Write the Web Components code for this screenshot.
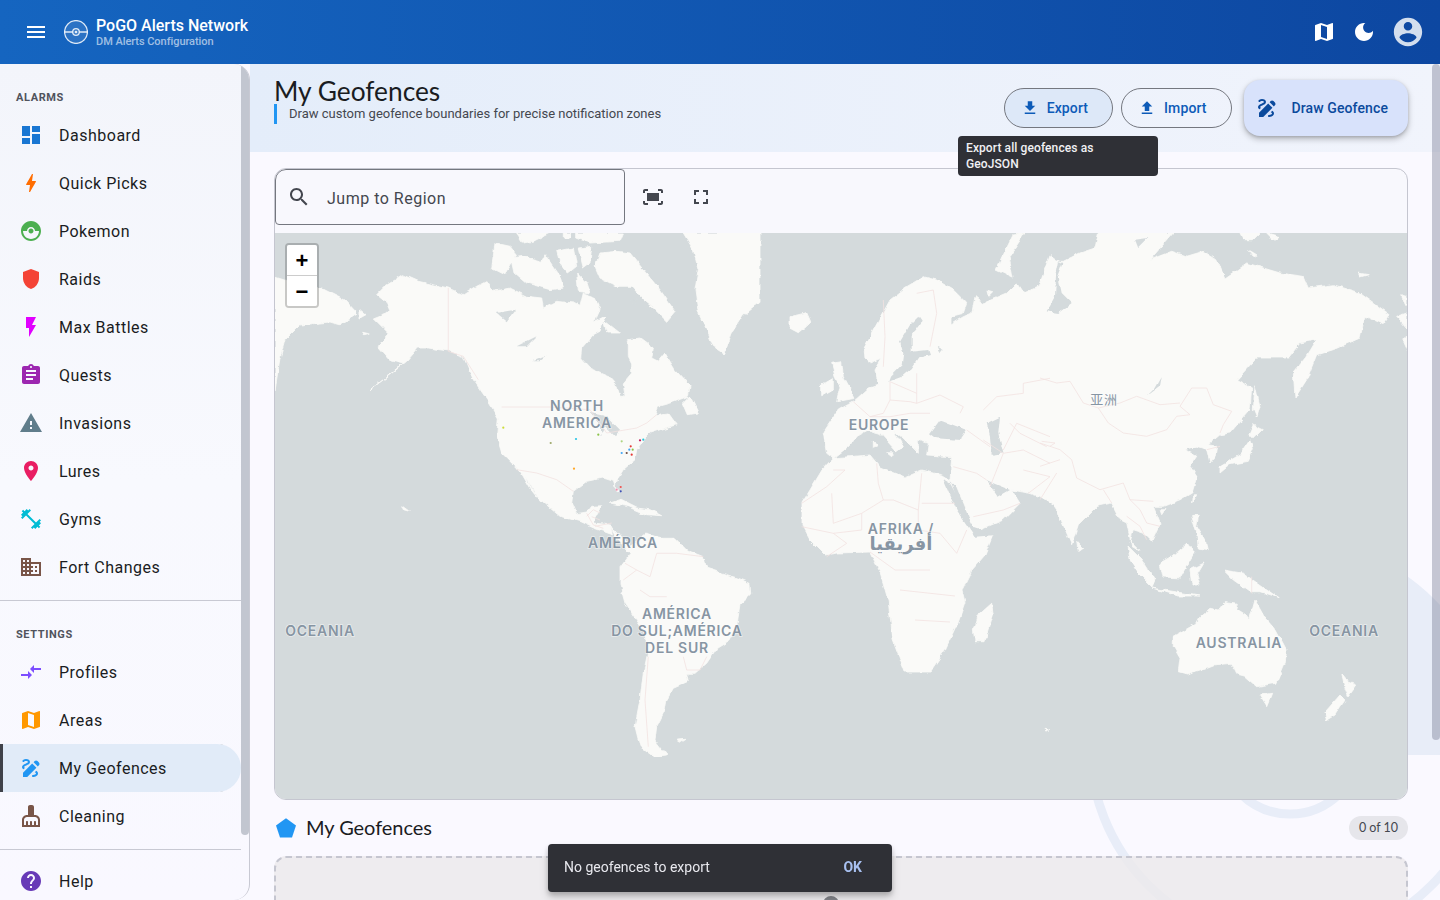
<!DOCTYPE html>
<html lang="en">
<head>
<meta charset="utf-8">
<title>PoGO Alerts Network</title>
<style>
  html, body { margin: 0; height: 100%; overflow: hidden; }
  body { font-family: Roboto, "Liberation Sans", sans-serif; background: #faf9ff; }
</style>
</head>
<body>
<app-shell>
  <nav-sidebar slot="side">
    <nav-label>ALARMS</nav-label>
    <nav-item icon="dashboard" color="#1976d2">Dashboard</nav-item>
    <nav-item icon="bolt" color="#ff6d00">Quick Picks</nav-item>
    <nav-item icon="pokeball" color="#4caf50">Pokemon</nav-item>
    <nav-item icon="shield" color="#f44336">Raids</nav-item>
    <nav-item icon="flash" color="#e100ff">Max Battles</nav-item>
    <nav-item icon="assignment" color="#9c27b0">Quests</nav-item>
    <nav-item icon="warning" color="#607d8b">Invasions</nav-item>
    <nav-item icon="place" color="#e91e63">Lures</nav-item>
    <nav-item icon="fitness" color="#00bcd4">Gyms</nav-item>
    <nav-item icon="domain" color="#795548">Fort Changes</nav-item>
    <nav-divider></nav-divider>
    <nav-label>SETTINGS</nav-label>
    <nav-item icon="compare" color="#7c4dff">Profiles</nav-item>
    <nav-item icon="map" color="#ff9800">Areas</nav-item>
    <nav-item icon="draw" color="#2196f3" active>My Geofences</nav-item>
    <nav-item icon="cleaning" color="#795548">Cleaning</nav-item>
    <nav-divider tight></nav-divider>
    <nav-item icon="help" color="#673ab7">Help</nav-item>
  </nav-sidebar>
  <main-view slot="main">
    <page-head></page-head>
    <map-card></map-card>
    <fence-list></fence-list>
  </main-view>
</app-shell>
<snack-bar></snack-bar>

<script>
const PATHS = {
  menu: 'M3 18h18v-2H3v2zm0-5h18v-2H3v2zm0-7v2h18V6H3z',
  dashboard: 'M3 13h8V3H3v10zm0 8h8v-6H3v6zm10 0h8V11h-8v10zm0-18v6h8V3h-8z',
  bolt: 'M11 21h-1l1-7H7.5c-.58 0-.57-.32-.38-.66.19-.34.05-.08.07-.12C8.48 10.94 10.42 7.54 13 3h1l-1 7h3.5c.49 0 .56.33.47.51l-.07.15C12.96 17.55 11 21 11 21z',
  pokeball: 'M14.5 12c0 1.38-1.12 2.5-2.5 2.5S9.5 13.38 9.5 12s1.12-2.5 2.5-2.5 2.5 1.12 2.5 2.5zm7.5 0c0 5.52-4.48 10-10 10S2 17.52 2 12 6.48 2 12 2s10 4.48 10 10zm-2 0h-4c0-2.21-1.79-4-4-4s-4 1.79-4 4H4c0 4.41 3.59 8 8 8s8-3.59 8-8z',
  shield: 'M12 2 4 5v6.09c0 5.05 3.41 9.76 8 10.91 4.59-1.15 8-5.86 8-10.91V5l-8-3z',
  flash: 'M7 2v11h3v9l7-12h-4l4-8z',
  assignment: 'M19 3h-4.18C14.4 1.84 13.3 1 12 1c-1.3 0-2.4.84-2.82 2H5c-1.1 0-2 .9-2 2v14c0 1.1.9 2 2 2h14c1.1 0 2-.9 2-2V5c0-1.1-.9-2-2-2zm-7 0c.55 0 1 .45 1 1s-.45 1-1 1-1-.45-1-1 .45-1 1-1zm2 14H7v-2h7v2zm3-4H7v-2h10v2zm0-4H7V7h10v2z',
  warning: 'M1 21h22L12 2 1 21zm12-3h-2v-2h2v2zm0-4h-2v-4h2v4z',
  place: 'M12 2C8.13 2 5 5.13 5 9c0 5.25 7 13 7 13s7-7.75 7-13c0-3.87-3.13-7-7-7zm0 9.5c-1.38 0-2.5-1.12-2.5-2.5s1.12-2.5 2.5-2.5 2.5 1.12 2.5 2.5-1.12 2.5-2.5 2.5z',
  fitness: 'M20.57 14.86L22 13.43 20.57 12 17 15.57 8.43 7 12 3.43 10.57 2 9.14 3.43 7.71 2 5.57 4.14 4.14 2.71 2.71 4.14l1.43 1.43L2 7.71l1.43 1.43L2 10.57 3.43 12 7 8.43 15.57 17 12 20.57 13.43 22l1.43-1.43L16.29 22l2.14-2.14 1.43 1.43 1.43-1.43-1.43-1.43L22 16.29z',
  domain: 'M12 7V3H2v18h20V7H12zM6 19H4v-2h2v2zm0-4H4v-2h2v2zm0-4H4V9h2v2zm0-4H4V5h2v2zm4 12H8v-2h2v2zm0-4H8v-2h2v2zm0-4H8V9h2v2zm0-4H8V5h2v2zm10 12h-8v-2h2v-2h-2v-2h2v-2h-2V9h8v10zm-2-8h-2v2h2v-2zm0 4h-2v2h2v-2z',
  compare: 'M9.01 14H2v2h7.01v3L13 15l-3.99-4v3zm5.98-1v-3H22V8h-7.01V5L11 9l3.99 4z',
  map: 'M20.5 3l-.16.03L15 5.1 9 3 3.36 4.9c-.21.07-.36.25-.36.48V20.5c0 .28.22.5.5.5l.16-.03L9 18.9l6 2.1 5.64-1.9c.21-.07.36-.25.36-.48V3.5c0-.28-.22-.5-.5-.5zM15 19l-6-2.11V5l6 2.11V19z',
  draw: 'M18.85 10.39l1.06-1.06c.78-.78.78-2.05 0-2.83L18.5 5.09c-.78-.78-2.05-.78-2.83 0l-1.06 1.06 4.24 4.24zm-5.66-2.83L4 16.76V21h4.24l9.19-9.19-4.24-4.25zM19 17.5c0 2.19-2.54 3.5-5 3.5-.55 0-1-.45-1-1s.45-1 1-1c1.54 0 3-.73 3-1.5 0-.47-.48-.87-1.23-1.2l1.48-1.48c1.07.63 1.75 1.47 1.75 2.68zM4.58 13.35C3.61 12.79 3 12.06 3 11c0-1.8 1.89-2.63 3.56-3.36C7.59 7.18 9 6.56 9 6c0-.41-.78-1-2-1-1.26 0-1.8.61-1.83.64-.35.41-.98.46-1.4.12-.41-.34-.49-.95-.15-1.38C3.73 4.24 4.76 3 7 3s4 1.32 4 3c0 1.87-1.93 2.72-3.64 3.47C6.42 9.88 5 10.5 5 11c0 .31.43.6 1.07.86l-1.49 1.49z',
  cleaning: 'M16 11h-1V3c0-1.1-.9-2-2-2h-2c-1.1 0-2 .9-2 2v8H8c-2.76 0-5 2.24-5 5v7h18v-7c0-2.76-2.24-5-5-5zm3 10h-2v-3c0-.55-.45-1-1-1s-1 .45-1 1v3h-2v-3c0-.55-.45-1-1-1s-1 .45-1 1v3H9v-3c0-.55-.45-1-1-1s-1 .45-1 1v3H5v-5c0-1.65 1.35-3 3-3h8c1.65 0 3 1.35 3 3v5z',
  help: 'M12 2C6.48 2 2 6.48 2 12s4.48 10 10 10 10-4.48 10-10S17.52 2 12 2zm1 17h-2v-2h2v2zm2.07-7.75l-.9.92C13.45 12.9 13 13.5 13 15h-2v-.5c0-1.1.45-2.1 1.17-2.83l1.24-1.26c.37-.36.59-.86.59-1.41 0-1.1-.9-2-2-2s-2 .9-2 2H8c0-2.21 1.79-4 4-4s4 1.79 4 4c0 .88-.36 1.68-.93 2.25z',
  moon: 'M12 3c-4.97 0-9 4.03-9 9s4.03 9 9 9 9-4.03 9-9c0-.46-.04-.92-.1-1.36-.98 1.37-2.58 2.26-4.4 2.26-2.98 0-5.4-2.42-5.4-5.4 0-1.81.89-3.42 2.26-4.4-.44-.06-.9-.1-1.36-.1z',
  account: 'M12 2C6.48 2 2 6.48 2 12s4.48 10 10 10 10-4.48 10-10S17.52 2 12 2zm0 3c1.66 0 3 1.34 3 3s-1.34 3-3 3-3-1.34-3-3 1.34-3 3-3zm0 14.2c-2.5 0-4.71-1.28-6-3.22.03-1.99 4-3.08 6-3.08 1.99 0 5.97 1.09 6 3.08-1.29 1.94-3.5 3.22-6 3.22z',
  download: 'M5 20h14v-2H5v2zM19 9h-4V3H9v6H5l7 7 7-7z',
  upload: 'M5 20h14v-2H5v2zm0-10h4v6h6v-6h4l-7-7-7 7z',
  search: 'M15.5 14h-.79l-.28-.27C15.41 12.59 16 11.11 16 9.5 16 5.91 13.09 3 9.5 3S3 5.91 3 9.5 5.91 16 9.5 16c1.61 0 3.09-.59 4.23-1.57l.27.28v.79l5 4.99L20.49 19l-4.99-5zm-6 0C7.01 14 5 11.99 5 9.5S7.01 5 9.5 5 14 7.01 14 9.5 11.99 14 9.5 14z',
  fit: 'M17 4h3c1.1 0 2 .9 2 2v2h-2V6h-3V4zM4 8V6h3V4H4c-1.1 0-2 .9-2 2v2h2zm16 8v2h-3v2h3c1.1 0 2-.9 2-2v-2h-2zM7 18H4v-2H2v2c0 1.1.9 2 2 2h3v-2zM18 8H6v8h12V8z',
  fullscreen: 'M7 14H5v5h5v-2H7v-3zm-2-4h2V7h3V5H5v5zm12 7h-3v2h5v-5h-2v3zM14 5v2h3v3h2V5h-5z',
  pentagon: 'M6 21.5 2 9.6 12 2.2l10 7.4-4 11.9z'
};

const svgIcon = (name, size, color) =>
  `<svg width="${size}" height="${size}" viewBox="0 0 24 24" fill="${color}" style="display:block;flex:none"><path d="${PATHS[name]}"/></svg>`;

class AppShell extends HTMLElement {
  constructor() {
    super();
    this.attachShadow({mode: 'open'}).innerHTML = `
      <style>
        :host { display: flex; flex-direction: column; height: 100vh; overflow: hidden; }
        header {
          flex: none; height: 64px; display: flex; align-items: center; padding: 0 15px 0 24px;
          background: linear-gradient(90deg, #1565c0, #0d47a1); color: #fff;
        }
        .logo { margin-left: 16px; margin-right: 8px; display: block; }
        .brand { display: flex; flex-direction: column; margin-top: -1px; }
        .brand b { font-size: 16px; line-height: 20px; font-weight: 500; }
        .brand small { font-size: 11px; line-height: 12px; color: rgba(255,255,255,.6); font-weight: 500; letter-spacing: -.05px; }
        .right { margin-left: auto; display: flex; align-items: center; gap: 16px; }
        .right svg:last-child { margin-left: -1px; }
        .row { flex: 1; min-height: 0; display: flex; }
      </style>
      <header>
        ${svgIcon('menu', 24, '#fff')}
        <svg class="logo" width="24" height="24" viewBox="0 0 24 24" fill="rgba(255,255,255,.1)" stroke="rgba(255,255,255,.85)">
          <circle cx="12" cy="12" r="11.4" stroke-width="1.3"/>
          <circle cx="12" cy="12" r="3.3" stroke-width="1.3"/>
          <circle cx="12" cy="12" r="1.3" fill="rgba(255,255,255,.85)" stroke="none"/>
          <path d="M.5 12h8.2M15.3 12h8.2" stroke-width="1.3"/>
        </svg>
        <div class="brand"><b>PoGO Alerts Network</b><small>DM Alerts Configuration</small></div>
        <div class="right">
          ${svgIcon('map', 24, '#fff')}
          ${svgIcon('moon', 24, '#fff')}
          ${svgIcon('account', 34, 'rgba(255,255,255,.82)')}
        </div>
      </header>
      <div class="row"><slot name="side"></slot><slot name="main"></slot></div>`;
  }
}

class NavSidebar extends HTMLElement {
  constructor() {
    super();
    this.attachShadow({mode: 'open'}).innerHTML = `
      <style>
        :host {
          flex: none; width: 250px; box-sizing: border-box; display: flex; position: relative; z-index: 2;
          background: linear-gradient(180deg, #f3f5fb, #f8f9fe 50%, #f9f8ff);
          border-right: 1px solid #c8c9d3; border-radius: 0 16px 16px 0; overflow: hidden;
        }
        .list { width: 241px; flex: none; padding-top: 16px; }
        .thumb { width: 8px; height: 771px; background: #c2c6d0; border-radius: 0 8px 4px 4px; flex: none; }
      </style>
      <div class="list"><slot></slot></div>
      <div class="thumb"></div>`;
  }
}

class NavLabel extends HTMLElement {
  constructor() {
    super();
    this.attachShadow({mode: 'open'}).innerHTML = `
      <style>
        :host {
          display: block; height: 31px; padding-left: 16px; box-sizing: border-box; line-height: 35px;
          font-size: 11px; font-weight: 700; letter-spacing: .6px; color: #50535c;
        }
      </style><slot></slot>`;
  }
}

class NavDivider extends HTMLElement {
  constructor() {
    super();
    this.attachShadow({mode: 'open'}).innerHTML = `
      <style>
        :host { display: block; height: 1px; background: #c8c9d3; margin: 9px 0 16px; }
        :host([tight]) { margin: 9px 0 7px; }
      </style>`;
  }
}

class NavItem extends HTMLElement {
  constructor() {
    super();
    const root = this.attachShadow({mode: 'open'});
    root.innerHTML = `
      <style>
        :host {
          display: flex; align-items: center; height: 48px; box-sizing: border-box; padding-left: 19px;
          font-size: 16px; letter-spacing: .5px; color: #1a1c22; border-radius: 0 24px 24px 0;
        }
        :host([active]) { background: #e1ebf8; box-shadow: inset 3px 0 0 #3f4149; }
        .ic { width: 24px; margin-right: 16px; flex: none; }
      </style>
      <span class="ic"></span><slot></slot>`;
    root.querySelector('.ic').innerHTML = svgIcon(this.getAttribute('icon'), 24, this.getAttribute('color'));
  }
}

class MainView extends HTMLElement {
  constructor() {
    super();
    this.attachShadow({mode: 'open'}).innerHTML = `
      <style>
        :host { flex: 1; min-width: 0; position: relative; overflow: hidden; background: #faf9ff; display: block; }
        .decor { position: absolute; left: 0; top: 0; }
        .content { position: relative; padding-right: 32px; }
        .bar { position: absolute; right: 0; top: 0; width: 8px; height: 676px; background: rgba(90,95,120,.33); border-radius: 4px; z-index: 3; }
      </style>
      <svg class="decor" width="1190" height="836" viewBox="250 64 1190 836">
        <defs><clipPath id="c"><rect x="250" y="64" width="1190" height="691"/></clipPath></defs>
        <circle cx="1290" cy="744" r="204" fill="#e8edf8" clip-path="url(#c)"/>
        <circle cx="1290" cy="744" r="200" fill="none" stroke="#e8edf8" stroke-width="9"/>
        <circle cx="1290" cy="744" r="70" fill="none" stroke="#e8edf8" stroke-width="9"/>
      </svg>
      <div class="content"><slot></slot></div>
      <div class="bar"></div>`;
  }
}

class PageHead extends HTMLElement {
  constructor() {
    super();
    this.attachShadow({mode: 'open'}).innerHTML = `
      <style>
        :host {
          display: flex; height: 88px; box-sizing: border-box; margin-right: -32px; padding: 0 32px 0 24px; position: relative;
          background: linear-gradient(90deg, #e4edfa, #f1f4fc);
        }
        .text { padding-top: 12px; }
        h1 { margin: 0; font: 400 26.3px/30px Lato, sans-serif; color: #1a1c22; }
        p {
          margin: -2px 0 0; border-left: 3px solid #2196f3; padding-left: 12px; height: 20px;
          font-size: 13px; line-height: 19px; color: #44474f;
        }
        .actions { margin-left: auto; display: flex; align-items: center; gap: 8px; }
        button {
          font: 500 14px Roboto, sans-serif; color: #0d5bb8; height: 40px; border-radius: 20px; border: 1px solid #74777f;
          background: transparent; display: flex; align-items: center; gap: 8px; padding: 0 24px 0 16px; letter-spacing: .1px;
        }
        button.on { background: #dde8f8; }
        button.fab {
          margin-left: 4px; height: 56px; border: 0; border-radius: 16px; background: #d8e2fb; color: #0b4a9d;
          padding: 0 20px 0 11px; gap: 13px; box-shadow: 0 3px 6px rgba(0,0,0,.25), 0 1px 3px rgba(0,0,0,.15);
        }
        .tip {
          position: absolute; left: 708px; top: 72px; width: 200px; height: 40px; box-sizing: border-box;
          background: #2f3036; color: #f1f0f4; border-radius: 4px; padding: 4px 8px;
          font-size: 12px; line-height: 16px; font-weight: 500; letter-spacing: .1px; z-index: 4;
        }
      </style>
      <div class="text">
        <h1>My Geofences</h1>
        <p>Draw custom geofence boundaries for precise notification zones</p>
      </div>
      <div class="actions">
        <button class="on">${svgIcon('download', 18, '#0d5bb8')}Export</button>
        <button>${svgIcon('upload', 18, '#0d5bb8')}Import</button>
        <button class="fab">${svgIcon('draw', 24, '#0b4a9d')}Draw Geofence</button>
      </div>
      <div class="tip">Export all geofences as<br>GeoJSON</div>`;
  }
}

class MapCard extends HTMLElement {
  constructor() {
    super();
    this.attachShadow({mode: 'open'}).innerHTML = `
      <style>
        :host {
          display: block; margin: 16px 0 0 24px; height: 632px; box-sizing: border-box;
          border: 1px solid #c5c6d0; border-radius: 12px; background: #f8f8fd; overflow: hidden; position: relative;
        }
        .tools { height: 64px; display: flex; align-items: flex-start; }
        .input {
          width: 350px; height: 56px; box-sizing: border-box; border: 1px solid #74777f; border-radius: 11px 4px 4px 4px;
          display: flex; align-items: center; padding: 0 11px; gap: 16px; font-size: 16px; letter-spacing: .5px; color: #44474f;
        }
        .input span { padding-top: 2px; }
        .btn { width: 48px; height: 56px; display: flex; align-items: center; justify-content: center; }
        .btn.first { margin-left: 4px; }
      </style>
      <div class="tools">
        <div class="input">${svgIcon('search', 24, '#44474f')}<span>Jump to Region</span></div>
        <div class="btn first">${svgIcon('fit', 24, '#44474f')}</div>
        <div class="btn">${svgIcon('fullscreen', 24, '#44474f')}</div>
      </div>
      <world-map></world-map>`;
  }
}

// coastlines were read off crops of the reference: each block gives the crop origin and its scale
const at = (ox, oy, s) => str => str.trim().split(/\s+/).map(p => {
  const [x, y] = p.split(',').map(Number);
  return (ox + x / s).toFixed(1) + ',' + (oy + y / s).toFixed(1);
}).join(' ');
const PG = at(0, 0, 1);
const NA = at(360, 233, 3);
const EU = at(790, 270, 3);
const AS = at(1040, 233, 3);
const SA = at(560, 470, 3);
const OC = at(960, 560, 3);

const LAND = [
  // north + central america
  NA(`50,185 75,160 130,125 175,145 265,165 310,185 350,160 380,145 400,175 450,165 500,190 545,195 550,225 590,205 640,210 660,220 670,180 700,190 720,230 705,265 735,250 720,295 700,305 665,345 662,375 690,405 750,430 768,450 780,490 795,490 790,450 815,420 815,390 805,370 805,320 840,315 880,345 875,375 895,385 915,360 945,410 990,460 985,490 930,510 895,520 885,545 925,540 950,575 900,590 870,600 855,615 830,650 825,680 790,710 775,735 765,760 783,780 770,775 760,745 730,735 680,745 640,775 635,810 650,845 680,840 695,820 725,818 705,850 700,870 755,876 760,906 701,885 660,866 600,850 570,825 530,790 505,745 470,705 425,660 410,610 415,555 385,505 340,440 310,370 270,355 205,345 175,345 140,385 90,425 30,470 70,440 130,390 90,380 55,340 85,300 40,255 90,235 80,210`),
  // baja
  NA(`475,710 490,725 530,795 510,770`),
  // arctic islands
  NA(`405,30 450,40 470,65 435,125 395,105`),
  NA(`455,75 490,70 545,85 555,65 600,130 610,165 570,170 500,150 465,120`),
  NA(`590,55 640,45 650,100 625,120 600,90`),
  NA(`655,45 695,40 690,90 670,105`),
  NA(`705,100 720,60 770,55 810,60 850,110 900,170 945,235 920,265 880,225 850,200 815,160 770,160 720,135`),
  NA(`650,120 680,150 690,180 655,175`),
  NA(`470,0 570,0 520,25 490,30`), NA(`610,0 632,0 630,15 610,15`), NA(`650,0 790,0 780,25 690,30 650,15`),
  NA(`970,510 990,490 1015,540 985,545`),
  NA(`730,260 780,300 740,300`),
  // greenland
  NA(`970,0 1200,0 1200,205 1150,245 1115,300 1095,362 1060,340 1040,290 1015,240 1005,170 1015,110 1000,50`),
  // caribbean
  NA(`750,810 780,800 830,825 870,830 905,848 860,845 800,820`),
  NA(`0,230 18,245 0,255`), NA(`5,295 28,300 10,305`), NA(`125,818 148,835 130,830`),
  // chukotka, left edge of the map
  PG(`275,277 300,285 325,290 345,300 357,313 340,325 330,322 300,325 285,340 280,358 275,390`),
  // south america
  SA(`155,165 185,205 215,225 260,190 300,205 345,205 380,240 430,260 440,295 520,320 570,340 572,375 540,405 530,470 510,510 470,535 440,580 405,610 380,610 385,635 340,655 320,690 315,720 290,770 285,810 320,855 280,860 240,830 225,770 240,690 250,610 265,540 250,480 195,400 180,345 180,290 210,250 170,205`),
  SA(`355,810 378,808 360,820`),
  // africa
  PG(`833,458 870,455 880,467 905,477 922,470 942,475 950,480 960,510 973,533 993,535 985,555 972,570 962,590 965,602 958,622 945,650 930,672 905,672 893,640 888,600 880,572 870,552 837,553 825,555 810,540 802,525 802,503 810,490 822,470`),
  // eurasia: europe, north russia, far east, then the south coast back west
  [EU(`105,480 145,420 190,395 235,355 265,345 255,300 275,265 240,280 225,265 222,235 245,190 300,90 350,50 400,20 440,30 490,60 530,100 520,130 480,140 480,165 520,140 545,130 555,80 580,100 650,70 680,40 700,70 745,50`),
    AS(`30,65 50,80 60,85 70,85 120,60 165,45 175,0 400,0 330,80 395,55 440,70 490,55 530,80 555,135 620,90 720,120 790,130 805,165 880,155 960,180 1050,245 1030,275 975,250 960,315 880,350 830,365 800,440 765,495 760,420 800,370 830,320 780,330 745,375 650,375 590,440 635,465 630,530 570,600 540,605 505,635 530,640 525,670 510,690 500,650 470,640 435,650 470,670 450,700 470,730 455,780 420,800 370,820 340,820 360,870 335,925 310,900 280,890 270,925 300,955 275,940 260,870 240,860 215,810 170,820 115,875 95,935 50,830 40,815 0,790`),
    EU(`780,690 720,670 665,660 690,700 640,750 555,785 500,650 480,630 485,560 410,555 415,520 385,510 385,550 345,510 310,480 340,530 320,545 270,490 235,480 205,495 175,530 130,565 110,550 100,490`)].join(' '),
  // med islands, britain, ireland, iceland
  EU(`250,510 262,530 250,535`), EU(`290,548 312,548 305,560`),
  EU(`125,280 155,275 160,320 195,385 140,395 150,350 135,320`),
  EU(`95,345 130,325 130,360 95,380`),
  EU(`0,140 50,128 62,155 25,188 0,175`),
  // russian arctic + far east islands
  PG(`996,270 1013,235 1025,233 1009,257 1013,278`),
  EU(`590,60 608,65 595,78`),
  AS(`600,0 660,0 640,20 610,20`), AS(`680,0 715,10 700,20`), AS(`955,120 985,125 960,132`), AS(`625,50 650,65 640,70`),
  AS(`1085,185 1101,190 1101,215`), AS(`1070,250 1101,240 1101,285`), AS(`1085,320 1101,310 1101,355`),
  AS(`645,455 660,520 650,555 640,530`),
  AS(`625,610 640,575 670,590 650,610`),
  AS(`630,620 640,650 625,685 570,695 540,720 540,700 600,665`),
  AS(`460,785 470,785 458,810`), AS(`360,830 375,830 365,845`),
  AS(`455,850 475,850 470,880 500,930 505,950 475,945 470,900`),
  AS(`110,925 128,945 115,955`),
  // indonesia
  PG(`1160,563 1172,556 1187,543 1194,553 1187,565 1180,578 1163,577`),
  PG(`1128,546 1142,560 1155,580 1152,587 1140,575 1130,560`),
  PG(`1152,588 1177,592 1200,596 1178,596`),
  PG(`1190,570 1204,563 1197,575 1200,585 1192,585`),
  OC(`790,30 850,40 955,113 900,95 870,95 820,60`),
  // australia, new zealand, madagascar
  OC(`640,230 710,190 720,170 750,145 775,150 795,125 835,130 830,150 870,175 885,120 910,165 945,205 980,270 975,310 950,370 890,380 850,345 830,340 815,310 760,315 720,330 680,342 655,335 660,295 640,260`),
  OC(`900,405 935,400 920,437`),
  OC(`1145,340 1165,365 1190,375 1165,410 1155,385`),
  OC(`1140,405 1155,420 1125,465 1100,480 1092,460`),
  OC(`95,130 100,165 75,245 45,245 40,210 50,170`),
  OC(`255,505 272,508 262,515`)
];

const SEA = [
  EU(`420,490 450,450 530,480 510,510 440,505`), // black sea
  EU(`590,460 630,440 625,490 640,550 605,555 600,500`), // caspian
  EU(`590,630 610,640 660,660 625,680 605,650`), // gulf
  EU(`460,628 480,640 553,775 620,795 555,800 500,720`), // red sea
  EU(`385,140 395,155 365,195 365,245 415,240 420,255 385,265 365,295 335,320 295,335 300,320 335,285 340,250 330,215 360,165`), // baltic
  EU(`440,230 458,240 450,250`),
  NA(`410,240 465,230 440,265`), NA(`470,340 530,310 500,340`), NA(`690,540 740,550 780,590 765,610 735,580 720,610 720,575`),
  NA(`812,205 832,200 825,222`), NA(`520,385 560,368 540,385`),
  AS(`57,85 70,90 55,130 65,180 95,210 55,240 20,235 45,190 48,130`), // ob
  AS(`365,430 360,460 320,490 345,465`), // baikal
  AS(`285,20 325,15 295,45`)
];

const BORDERS = [
  NA(`265,165 265,355 310,370 355,440`), NA(`425,522 570,522 690,530 740,600 830,585 860,570 890,545`),
  NA(`470,710 530,720 590,740 640,775`), NA(`680,850 700,830 720,840`), NA(`705,880 755,870`),
  EU(`190,395 240,440 280,430 300,390 300,335`), EU(`300,335 380,370 380,310`), EU(`380,370 380,400 450,375 520,410 510,430`),
  EU(`240,440 300,440 360,430 420,430`), EU(`280,90 285,200 280,290`), EU(`380,70 430,60 440,130 420,230`), EU(`300,390 360,395 380,400`),
  EU(`130,600 165,600 110,650 35,700`), EU(`125,670 130,760 215,730 280,690 310,690 385,720 395,610`), EU(`260,580 265,640 280,690`),
  EU(`395,700 495,700`), EU(`215,730 215,780 130,790`), EU(`35,770 130,790 170,820 110,860`), EU(`385,720 385,780 450,790 500,850 530,780`),
  EU(`580,420 620,380 700,370 700,340 780,325`), EU(`640,540 680,460 780,500`), EU(`660,460 690,490 770,530`), EU(`580,510 640,550 700,540 780,580`),
  EU(`700,600 780,620 715,670`), EU(`490,590 560,610 590,630`), EU(`550,740 640,720 690,700`), EU(`600,650 640,550`), EU(`530,480 600,530`),
  AS(`0,435 50,450 90,445 130,510 175,525 205,570 250,600 320,610 380,590 410,550 450,545 420,520 455,465 500,465 520,515 575,535 550,575 540,600`),
  AS(`175,525 240,510 290,490 360,515 420,510`), AS(`0,630 60,650 95,680 110,735 180,770 250,750 270,800 340,805`),
  AS(`190,770 215,810`), AS(`270,800 300,830 320,870 360,880`), AS(`260,850 300,880 320,920`), AS(`0,700 60,680`), AS(`0,800 50,720`),
  AS(`5,625 45,630 30,640`), AS(`500,650 540,640`),
  SA(`195,280 230,300 270,320 290,250 350,250 430,260`), SA(`240,360 270,380 320,380`), SA(`190,330 230,300`), SA(`265,560 255,690 265,830`),
  SA(`370,560 380,600 420,600 440,560`), SA(`80,130 100,165 130,175`), SA(`95,140 120,150`),
  OC(`875,50 875,100`), PG(`900,590 955,596`), PG(`915,620 950,622`), PG(`870,552 895,570 930,570`)
];

const DOTS = [
  [430,584,'#cddc39'],[572,630,'#9ea96b'],[648,618,'#29c5e6'],[715,605,'#8bc34a'],[785,625,'#aed581'],[642,707,'#ffa726'],
  [812,640,'#e53935'],[808,650,'#42a5f5'],[800,660,'#6d4c41'],[815,665,'#e53935'],[785,660,'#42a5f5'],[840,622,'#c2185b'],
  [850,620,'#26c6da'],[818,650,'#8bc34a'],[782,762,'#ef5350'],[770,770,'#f48fb1'],[782,775,'#3f51b5']
];

class WorldMap extends HTMLElement {
  constructor() {
    super();
    const land = LAND.map(p => `<polygon points="${p}"/>`).join('');
    const sea = SEA.map(p => `<polygon points="${p}"/>`).join('');
    const borders = BORDERS.map(p => `<polyline points="${p}"/>`).join('');
    const dots = DOTS.map(d => `<circle cx="${(360 + d[0] / 3).toFixed(1)}" cy="${(233 + d[1] / 3).toFixed(1)}" r="1.1" fill="${d[2]}"/>`).join('');
    this.attachShadow({mode: 'open'}).innerHTML = `
      <style>
        :host { display: block; position: relative; height: 566px; background: #d4dadc; }
        svg { display: block; }
        text {
          font: 600 14px Inter, "Noto Sans CJK SC", "DejaVu Sans", sans-serif; fill: #8795a3; text-anchor: middle;
          stroke: rgba(255,255,255,.55); stroke-width: 1.4px; paint-order: stroke; letter-spacing: .75px;
        }
        .zoom {
          position: absolute; left: 10px; top: 10px; border: 2px solid rgba(0,0,0,.2); border-radius: 4px; background-clip: padding-box;
        }
        .zoom div {
          width: 30px; height: 30px; background: #fff; color: #000; text-align: center;
          font: 700 22px/31px "Liberation Sans", sans-serif;
        }
        .zoom div:first-child { border-bottom: 1px solid #ccc; border-radius: 2px 2px 0 0; }
        .zoom div:last-child { border-radius: 0 0 2px 2px; }
      </style>
      <svg width="1132" height="566" viewBox="275 233 1132 566">
        <defs>
          <filter id="rough" x="0" y="0" width="100%" height="100%">
            <feTurbulence type="fractalNoise" baseFrequency=".11" numOctaves="3" seed="4"/>
            <feDisplacementMap in="SourceGraphic" scale="4.5" xChannelSelector="R" yChannelSelector="G"/>
          </filter>
        </defs>
        <g filter="url(#rough)">
          <g fill="#fafaf8" stroke="#fafaf8" stroke-width=".8" stroke-linejoin="round">${land}</g>
          <g fill="#d4dadc">${sea}</g>
        </g>
        <g fill="none" stroke="#f2e2e1" stroke-width=".8" stroke-linejoin="round">${borders}</g>
        ${dots}
        <text x="577" y="411">NORTH</text>
        <text x="577" y="428">AMERICA</text>
        <text x="879" y="430">EUROPE</text>
        <text x="1104" y="404" style="font-size:13px;font-weight:400">亚洲</text>
        <text x="901" y="534">AFRIKA /</text>
        <text x="901" y="550" style="font-size:18px">أفريقيا</text>
        <text x="623" y="548">AMÉRICA</text>
        <text x="677" y="619">AMÉRICA</text>
        <text x="677" y="636">DO SUL;AMÉRICA</text>
        <text x="677" y="653">DEL SUR</text>
        <text x="320" y="636">OCEANIA</text>
        <text x="1344" y="636">OCEANIA</text>
        <text x="1239" y="648">AUSTRALIA</text>
      </svg>
      <div class="zoom"><div>+</div><div>−</div></div>`;
  }
}

class FenceList extends HTMLElement {
  constructor() {
    super();
    this.attachShadow({mode: 'open'}).innerHTML = `
      <style>
        :host { display: block; margin: 16px 0 0 24px; }
        .head { display: flex; align-items: center; height: 24px; }
        .head h2 { margin: -2px 0 0 8px; font: 400 20px/24px Lato, sans-serif; color: #1a1c22; letter-spacing: -.05px; }
        .count {
          margin-left: auto; height: 24px; width: 59px; border-radius: 12px; background: #e6e6eb; color: #44474f;
          font: 400 12.5px/23px Lato, sans-serif; text-align: center;
        }
        .empty {
          margin-top: 16px; height: 200px; box-sizing: border-box; border: 2px dashed #c5c6d0; border-radius: 12px;
          background: rgba(235,232,235,.8); padding: 38px 20px 0 0; display: flex; justify-content: center;
        }
        .empty i { width: 16px; height: 16px; border-radius: 50%; background: #808288; display: block; }
      </style>
      <div class="head">${svgIcon('pentagon', 24, '#2196f3')}<h2>My Geofences</h2><span class="count">0 of 10</span></div>
      <div class="empty"><i></i></div>`;
  }
}

class SnackBar extends HTMLElement {
  constructor() {
    super();
    this.attachShadow({mode: 'open'}).innerHTML = `
      <style>
        :host {
          position: fixed; left: 548px; bottom: 8px; width: 344px; height: 48px; box-sizing: border-box; z-index: 9;
          display: flex; align-items: center; padding: 0 30px 2px 16px; background: #2f3036; border-radius: 4px;
          color: #e8e8ee; font-size: 14px; box-shadow: 0 3px 5px rgba(0,0,0,.2), 0 6px 10px rgba(0,0,0,.14);
        }
        b { margin-left: auto; color: #a8c0f0; font-weight: 700; }
      </style>
      <span>No geofences to export</span><b>OK</b>`;
  }
}

customElements.define('app-shell', AppShell);
customElements.define('nav-sidebar', NavSidebar);
customElements.define('nav-label', NavLabel);
customElements.define('nav-divider', NavDivider);
customElements.define('nav-item', NavItem);
customElements.define('main-view', MainView);
customElements.define('page-head', PageHead);
customElements.define('map-card', MapCard);
customElements.define('world-map', WorldMap);
customElements.define('fence-list', FenceList);
customElements.define('snack-bar', SnackBar);
</script>
</body>
</html>
